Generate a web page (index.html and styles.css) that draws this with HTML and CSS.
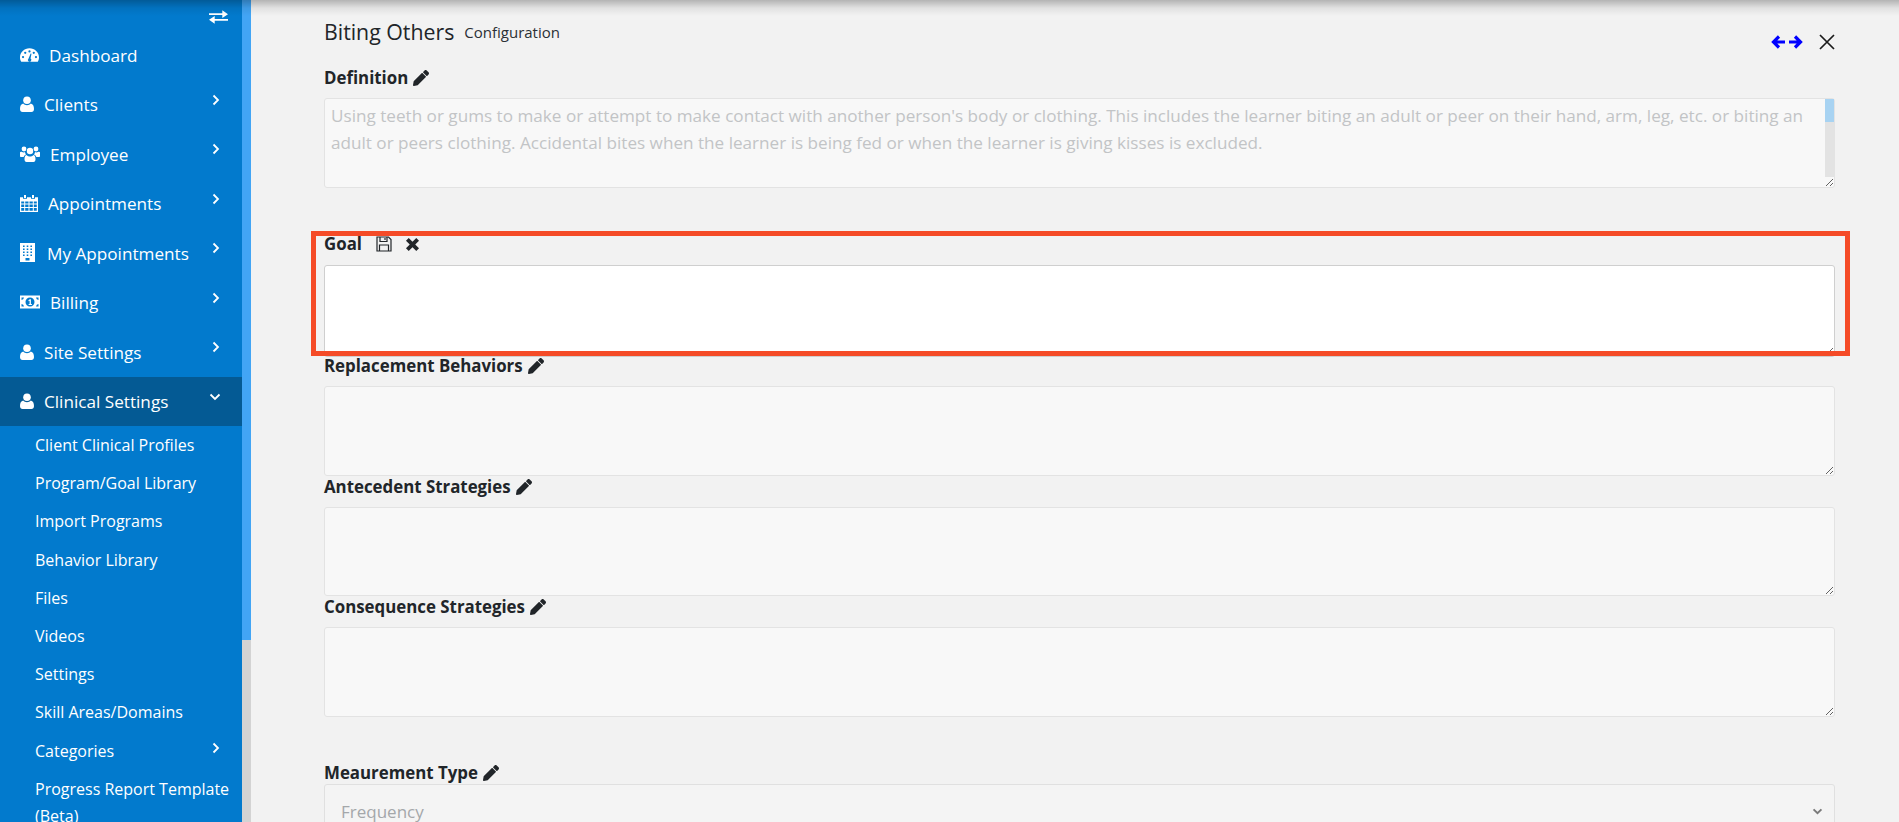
FILE: index.html
```html
<!DOCTYPE html>
<html lang="en">
<head>
<meta charset="utf-8">
<title>Biting Others Configuration</title>
<link rel="stylesheet" href="styles.css">
</head>
<body>
<div class="app">
  <aside class="sidebar">
    <nav class="nav">
      <div class="toggle">
        <svg class="ico-toggle" viewBox="0 0 20 14"><path fill="currentColor" d="M0 3h14V0l6 4-6 4V5H0zM20 9H6V6l-6 4 6 4v-3h14z"/></svg>
      </div>
      <a class="item"><svg class="i w19" viewBox="0 0 20 16"><path fill="currentColor" fill-rule="evenodd" d="M10 1C4.500 1 0 5.300 0 10.600c0 1.700.5 3.300 1.300 4.400h17.400c.8-1.100 1.300-2.700 1.300-4.400C20 5.300 15.500 1 10 1zM10 3a1.200 1.200 0 1 1 0 2.400A1.200 1.200 0 0 1 10 3zM5.500 4.500a1.200 1.200 0 1 1 0 2.400 1.200 1.200 0 0 1 0-2.400zM14.500 4.500a1.200 1.200 0 1 1 0 2.400 1.200 1.200 0 0 1 0-2.400zM3.200 9a1.200 1.200 0 1 1 0 2.400 1.200 1.200 0 0 1 0-2.400zM16.800 9a1.200 1.200 0 1 1 0 2.400 1.200 1.200 0 0 1 0-2.400zM11.200 6.500l.9.300-1 5a1.800 1.800 0 1 1-2.200.2z"/></svg><span>Dashboard</span></a>
      <a class="item"><svg class="i w14" viewBox="0 0 14 16"><circle fill="currentColor" cx="7" cy="4.200" r="3.800"/><path fill="currentColor" d="M3.200 7.500C1 8 0 10 0 13c0 1.800 1 3 2.600 3h8.800c1.600 0 2.600-1.200 2.600-3 0-3-1-5-3.200-5.500C9.800 8.600 8.500 9.200 7 9.200S4.200 8.600 3.200 7.500z"/></svg><span>Clients</span><svg class="chev" viewBox="0 0 8 12"><path d="M1.500 1.500 6 6l-4.500 4.500" fill="none" stroke="currentColor" stroke-width="1.800"/></svg></a>
      <a class="item"><svg class="i w20" viewBox="0 0 20 16"><circle fill="currentColor" cx="4" cy="3" r="2.400"/><circle fill="currentColor" cx="16" cy="3" r="2.400"/><circle fill="currentColor" cx="10" cy="5" r="3.200"/><path fill="currentColor" d="M0 6.500C0 5.800 1 5.500 2 6c1 .5 2.500.5 3 0 0 1 .3 1.800 1 2.500-1.200.5-2 1.300-2.300 2.500H1C.3 11 0 10.500 0 10zM20 6.500c0-.7-1-1-2-.5-1 .5-2.500.5-3 0 0 1-.3 1.800-1 2.500 1.200.5 2 1.300 2.300 2.500H19c.7 0 1-.5 1-1zM6.500 9c1 1 2.500 1.500 3.500 1.500S12.500 10 13.500 9c1.500.3 2 2 2 4.200 0 1.500-.7 2.800-2 2.800h-7c-1.300 0-2-1.300-2-2.800C4.500 11 5 9.300 6.500 9z"/></svg><span>Employee</span><svg class="chev" viewBox="0 0 8 12"><path d="M1.500 1.500 6 6l-4.500 4.500" fill="none" stroke="currentColor" stroke-width="1.800"/></svg></a>
      <a class="item"><svg class="i w18" viewBox="0 0 18 17"><path fill="currentColor" fill-rule="evenodd" d="M4 0h2v3H4zM12 0h2v3h-2zM0 2.200h3v1.600h4V2.200h4v1.600h4V2.200h3V17H0zM1.200 6.500v2h3v-2zM5.200 6.500v2h3.300v-2zM9.500 6.500v2h3.300v-2zM13.800 6.500v2h3v-2zM1.200 9.500v2.400h3V9.500zM5.200 9.500v2.400h3.300V9.500zM9.500 9.500v2.400h3.300V9.500zM13.800 9.500v2.400h3V9.500zM1.200 12.900v2.900h3v-2.900zM5.200 12.900v2.900h3.300v-2.900zM9.500 12.900v2.900h3.300v-2.900zM13.800 12.900v2.900h3v-2.900z"/></svg><span>Appointments</span><svg class="chev" viewBox="0 0 8 12"><path d="M1.500 1.500 6 6l-4.500 4.500" fill="none" stroke="currentColor" stroke-width="1.800"/></svg></a>
      <a class="item"><svg class="i w15" viewBox="0 0 15 19"><path fill="currentColor" fill-rule="evenodd" d="M0 0h15v19H0zM3 2.500v1.600h1.600V2.500zM6.700 2.500v1.600h1.600V2.500zM10.400 2.500v1.600H12V2.500zM3 5.500v1.600h1.600V5.500zM6.700 5.500v1.600h1.600V5.500zM10.400 5.500v1.600H12V5.500zM3 8.500v1.600h1.600V8.500zM6.700 8.500v1.600h1.600V8.500zM10.400 8.500v1.600H12V8.500zM3 11.500v1.600h1.600v-1.600zM6.700 11.500v1.600h1.600v-1.600zM10.400 11.500v1.600H12v-1.600zM5.500 15v2.500h4V15z"/></svg><span>My Appointments</span><svg class="chev" viewBox="0 0 8 12"><path d="M1.500 1.500 6 6l-4.500 4.500" fill="none" stroke="currentColor" stroke-width="1.800"/></svg></a>
      <a class="item"><svg class="i w20" viewBox="0 0 20 13"><path fill="currentColor" fill-rule="evenodd" d="M0 0h20v13H0zM4 2 1.500 2v2.500A3 3 0 0 0 4 2zM16 2a3 3 0 0 0 2.500 2.500V2zM1.500 8.500V11H4a3 3 0 0 0-2.500-2.500zM18.500 8.500A3 3 0 0 0 16 11h2.500zM10 2a4.500 4.500 0 1 0 0 9 4.500 4.500 0 0 0 0-9zM9.800 3.800h1.100v4.600h1v1H8.600v-1h1V5.200l-.9.500-.4-.8z"/></svg><span>Billing</span><svg class="chev" viewBox="0 0 8 12"><path d="M1.500 1.500 6 6l-4.500 4.500" fill="none" stroke="currentColor" stroke-width="1.800"/></svg></a>
      <a class="item"><svg class="i w14" viewBox="0 0 14 16"><circle fill="currentColor" cx="7" cy="4.200" r="3.800"/><path fill="currentColor" d="M3.200 7.500C1 8 0 10 0 13c0 1.800 1 3 2.600 3h8.800c1.600 0 2.600-1.200 2.600-3 0-3-1-5-3.200-5.500C9.800 8.600 8.500 9.200 7 9.200S4.200 8.600 3.200 7.500z"/></svg><span>Site Settings</span><svg class="chev" viewBox="0 0 8 12"><path d="M1.500 1.500 6 6l-4.500 4.500" fill="none" stroke="currentColor" stroke-width="1.800"/></svg></a>
      <a class="item active"><svg class="i w14" viewBox="0 0 14 16"><circle fill="currentColor" cx="7" cy="4.200" r="3.800"/><path fill="currentColor" d="M3.200 7.500C1 8 0 10 0 13c0 1.800 1 3 2.600 3h8.800c1.600 0 2.600-1.200 2.600-3 0-3-1-5-3.200-5.500C9.800 8.600 8.500 9.200 7 9.200S4.200 8.600 3.200 7.500z"/></svg><span>Clinical Settings</span><svg class="chev down" viewBox="0 0 12 8"><path d="M1.500 1.500 6 6l4.500-4.500" fill="none" stroke="currentColor" stroke-width="1.800"/></svg></a>
      <a class="sub">Client Clinical Profiles</a>
      <a class="sub">Program/Goal Library</a>
      <a class="sub">Import Programs</a>
      <a class="sub">Behavior Library</a>
      <a class="sub">Files</a>
      <a class="sub">Videos</a>
      <a class="sub">Settings</a>
      <a class="sub">Skill Areas/Domains</a>
      <a class="sub">Categories<svg class="chev" viewBox="0 0 8 12"><path d="M1.500 1.500 6 6l-4.500 4.500" fill="none" stroke="currentColor" stroke-width="1.800"/></svg></a>
      <a class="sub">Progress Report Template (Beta)</a>
    </nav>
    <div class="rail"><div class="rail-thumb"></div></div>
  </aside>
  <main class="main">
    <header class="head">
      <h1 class="title">Biting Others</h1>
      <span class="subtitle">Configuration</span>
      <div class="tools">
        <svg class="arrows" viewBox="0 0 32 14"><path d="M8 1.500 2.500 7 8 12.500M3 7H14M24 1.500 29.500 7 24 12.500M29 7H18" fill="none" stroke="#0000ff" stroke-width="3.200"/></svg>
        <svg class="close" viewBox="0 0 16 16"><path d="M1 1l14 14M15 1 1 15" fill="none" stroke="#1b1b1b" stroke-width="1.700"/></svg>
      </div>
    </header>

    <section class="field def">
      <div class="label">Definition <svg class="pencil" viewBox="0 0 512 512"><path fill="currentColor" d="M497.900 142.100l-46.100 46.100c-4.700 4.700-12.300 4.700-17 0l-111-111c-4.700-4.700-4.700-12.300 0-17l46.100-46.100c18.700-18.700 49.100-18.700 67.900 0l60.100 60.100c18.800 18.700 18.800 49.100 0 67.900zM284.200 99.800L21.600 362.400.4 483.900c-2.900 16.400 11.400 30.600 27.800 27.800l121.500-21.300 262.600-262.600c4.700-4.700 4.700-12.300 0-17l-111-111c-4.800-4.700-12.400-4.700-17.100 0z"/></svg></div>
      <div class="ta-wrap">
        <textarea class="ta" readonly>Using teeth or gums to make or attempt to make contact with another person's body or clothing. This includes the learner biting an adult or peer on their hand, arm, leg, etc. or biting an
adult or peers clothing. Accidental bites when the learner is being fed or when the learner is giving kisses is excluded.</textarea>
        <div class="ta-rail"><div class="ta-thumb"></div></div>
      </div>
    </section>

    <section class="field goal">
      <div class="label">Goal
        <svg class="save" viewBox="0 0 16 16"><path d="M1 1h11.500L15 3.500V15H1z M4 1v4.500h7V1 M9 2v2 M3.500 15V9h9v6" fill="none" stroke="#212529" stroke-width="1.200"/></svg>
        <svg class="cancel" viewBox="0 0 14 14"><path d="M2.200 2.200l9.600 9.600M11.800 2.200l-9.600 9.600" fill="none" stroke="#212529" stroke-width="3.600"/></svg>
      </div>
      <textarea class="ta ta-edit"></textarea>
    </section>

    <section class="field">
      <div class="label">Replacement Behaviors <svg class="pencil" viewBox="0 0 512 512"><path fill="currentColor" d="M497.900 142.100l-46.100 46.100c-4.700 4.700-12.300 4.700-17 0l-111-111c-4.700-4.700-4.700-12.300 0-17l46.100-46.100c18.700-18.700 49.100-18.700 67.900 0l60.100 60.100c18.800 18.700 18.800 49.100 0 67.900zM284.200 99.800L21.600 362.400.4 483.900c-2.900 16.400 11.400 30.600 27.800 27.800l121.500-21.300 262.600-262.600c4.700-4.700 4.700-12.300 0-17l-111-111c-4.800-4.700-12.400-4.700-17.100 0z"/></svg></div>
      <textarea class="ta" readonly></textarea>
    </section>

    <section class="field">
      <div class="label">Antecedent Strategies <svg class="pencil" viewBox="0 0 512 512"><path fill="currentColor" d="M497.900 142.100l-46.100 46.100c-4.700 4.700-12.300 4.700-17 0l-111-111c-4.700-4.700-4.700-12.300 0-17l46.100-46.100c18.700-18.700 49.100-18.700 67.900 0l60.100 60.100c18.800 18.700 18.800 49.100 0 67.900zM284.200 99.800L21.600 362.400.4 483.900c-2.900 16.400 11.400 30.600 27.800 27.800l121.500-21.300 262.600-262.600c4.700-4.700 4.700-12.300 0-17l-111-111c-4.800-4.700-12.400-4.700-17.100 0z"/></svg></div>
      <textarea class="ta" readonly></textarea>
    </section>

    <section class="field">
      <div class="label">Consequence Strategies <svg class="pencil" viewBox="0 0 512 512"><path fill="currentColor" d="M497.900 142.100l-46.100 46.100c-4.700 4.700-12.300 4.700-17 0l-111-111c-4.700-4.700-4.700-12.300 0-17l46.100-46.100c18.700-18.700 49.100-18.700 67.900 0l60.100 60.100c18.800 18.700 18.800 49.100 0 67.900zM284.200 99.800L21.600 362.400.4 483.900c-2.900 16.400 11.400 30.600 27.800 27.800l121.500-21.300 262.600-262.600c4.700-4.700 4.700-12.300 0-17l-111-111c-4.800-4.700-12.400-4.700-17.100 0z"/></svg></div>
      <textarea class="ta" readonly></textarea>
    </section>

    <section class="field measure">
      <div class="label tight">Meaurement Type <svg class="pencil" viewBox="0 0 512 512"><path fill="currentColor" d="M497.900 142.100l-46.100 46.100c-4.700 4.700-12.300 4.700-17 0l-111-111c-4.700-4.700-4.700-12.300 0-17l46.100-46.100c18.700-18.700 49.100-18.700 67.900 0l60.100 60.100c18.800 18.700 18.800 49.100 0 67.900zM284.200 99.800L21.600 362.400.4 483.900c-2.900 16.400 11.400 30.600 27.800 27.800l121.500-21.300 262.600-262.600c4.700-4.700 4.700-12.300 0-17l-111-111c-4.800-4.700-12.400-4.700-17.100 0z"/></svg></div>
      <div class="select"><span>Frequency</span><svg class="sel-chev" viewBox="0 0 12 8"><path d="M1.500 1.500 6 6l4.500-4.500" fill="none" stroke="#7a7a7a" stroke-width="2.200"/></svg></div>
    </section>

    <div class="highlight"></div>
  </main>
  <div class="top-shadow"></div>
</div>
</body>
</html>
```
FILE: styles.css
```css
* { box-sizing: border-box; }
html, body { margin: 0; height: 100%; overflow: hidden; }
body { font-family: "Open Sans", "Noto Sans", sans-serif; color: #212529; background: #f2f2f2; }

.app { display: flex; height: 822px; position: relative; overflow: hidden; }

/* Sidebar */
.sidebar {
  flex: 0 0 251px;
  height: 822px;
  display: flex;
  overflow: hidden;
  color: #fff;
}
.nav { flex: 0 0 242px; display: flex; flex-direction: column; background: #027acd; overflow: hidden; }
.rail { flex: 0 0 9px; background: #d3d3d3; }
.rail-thumb { height: 640px; background: #42a5f5; }
.toggle { height: 30px; flex: none; display: flex; justify-content: flex-end; padding: 10px 14px 0 0; }
.ico-toggle { width: 19px; height: 14px; display: block; }

.item {
  height: 49.5px;
  flex: none;
  display: flex;
  align-items: center;
  gap: 10px;
  padding-left: 20px;
  font-size: 17.150px;
  position: relative;
}
.item span { margin-top: 1px; }
.item.active { background: #045a94; }
.i { display: block; flex: none; }
.w14 { width: 14px; height: 16px; }
.w15 { width: 15px; height: 19px; margin-right: 2px; }
.w18 { width: 18px; height: 17px; }
.w19 { width: 19px; height: 16px; }
.w20 { width: 20px; height: 16px; }
.chev {
  position: absolute;
  right: 22px;
  top: 14px;
  width: 8px;
  height: 12px;
}
.chev.down { width: 12px; height: 8px; right: 21px; top: 16px; }

.sub {
  flex: none;
  display: block;
  position: relative;
  padding: 6.100px 10px 5.100px 35px;
  font-size: 16px;
  line-height: 27px;
}
.sub .chev { top: 10px; }

/* Main */
.main { flex: 1; position: relative; padding: 0 64px 0 73px; min-width: 0; }
.head { display: flex; align-items: center; gap: 10px; height: 68px; padding: 18px 0 22px; position: relative; }
.title { margin: 0; font-size: 21.300px; font-weight: 400; line-height: 28px; }
.subtitle { font-size: 15px; color: #2b3035; }
.tools { position: absolute; right: 0; top: 34px; display: flex; align-items: center; gap: 16px; }
.arrows { width: 32px; height: 14px; display: block; }
.close { width: 16px; height: 16px; display: block; }

.field { margin-bottom: 1px; }
.def { margin-bottom: 46.500px; }
.goal { margin-bottom: 2px; }
.measure { margin-top: 46.500px; }
.label {
  font-size: 16.850px;
  font-weight: 700;
  line-height: 20px;
  height: 20px;
  margin-bottom: 10px;
  display: flex;
  align-items: center;
  gap: 5px;
  color: #212529;
}
.label.tight { margin-bottom: 1px; }
.goal .label { margin-bottom: 11px; }
.pencil { width: 16px; height: 16px; display: block; }
.save { width: 16px; height: 16px; margin-left: 9px; display: block; }
.cancel { width: 15px; height: 15px; margin-left: 8px; display: block; }

.ta-wrap { position: relative; }
.ta {
  display: block;
  width: 100%;
  height: 89.500px;
  padding: 3px 6px;
  margin: 0;
  font-family: inherit;
  font-size: 17.140px;
  line-height: 27px;
  color: #c2c4c6;
  background: #f8f8f8;
  border: 1px solid #e3e3e3;
  border-radius: 3px;
  outline: none;
  resize: vertical;
  white-space: pre;
  overflow: hidden;
}
.ta-rail { position: absolute; right: 1px; top: 1px; width: 9px; height: 78px; background: #e3e3e3; }
.ta-thumb { height: 23px; background: #a8d3f2; }
.ta-edit { background: #fff; border-color: #cfcfcf; height: 92px; margin-bottom: -3px; }

.select {
  height: 60px;
  border: 1px solid #e0e0e0;
  background: #f4f4f4;
  border-radius: 3px 3px 0 0;
  padding: 13px 11px 0 16px;
  display: flex;
  justify-content: space-between;
  font-size: 17px;
  line-height: 28px;
  color: #a4a7aa;
}
.sel-chev { width: 11px; height: 7px; margin-top: 10px; }

/* Overlays */
.highlight {
  position: absolute;
  left: 60px;
  top: 231px;
  width: 1539px;
  height: 125px;
  border: 5px solid #f54b27;
  pointer-events: none;
}
.top-shadow {
  position: absolute;
  left: 0;
  right: 0;
  top: 0;
  height: 16px;
  background: linear-gradient(to bottom, rgba(0,0,0,.26), rgba(0,0,0,.07) 50%, rgba(0,0,0,0));
  pointer-events: none;
}
```
